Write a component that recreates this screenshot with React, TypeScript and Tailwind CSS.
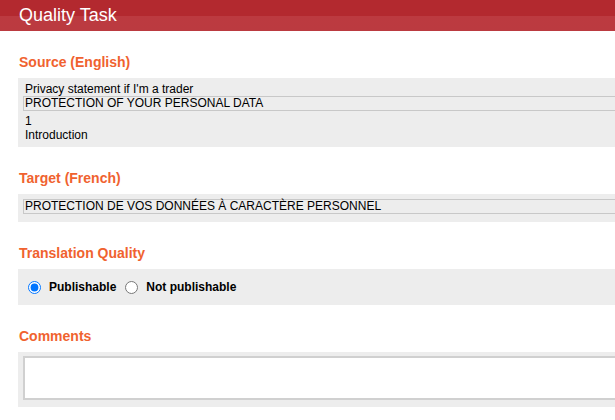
import React from "react";

const Heading = ({ children }: { children: React.ReactNode }) => (
  <div className="mt-[23px] mb-[8px] pl-[19px] h-[16px] leading-[16px] text-[14px] font-bold text-[#f0622f]">
    {children}
  </div>
);

export default function App() {
  return (
    <div
      className="w-[615px] h-[420px] overflow-hidden bg-white"
      style={{ fontFamily: '"Liberation Sans", Arial, sans-serif' }}
    >
      <div className="w-[800px]">
        <div className="h-[31px] bg-[linear-gradient(to_bottom,#b3292f_0%,#b3292f_52%,#bc3a40_52%,#bb3a40_100%)] pl-[19px] text-white text-[18px] leading-[30px]">
          Quality Task
        </div>

        <Heading>Source (English)</Heading>
        <div className="ml-[18px] bg-[#ededed] px-[5px] pt-[5px] pb-[5px] text-[12px] text-black">
          <div className="h-[13px] leading-[13px] pl-[2px]">Privacy statement if I'm a trader</div>
          <div className="h-[15px] border border-[#c8c8c8] pl-[1px] leading-[13px]">
            PROTECTION OF YOUR PERSONAL DATA
          </div>
          <div className="mt-[3px] h-[14px] leading-[14px] pl-[2px]">1</div>
          <div className="h-[14px] leading-[14px] pl-[2px]">Introduction</div>
        </div>

        <Heading>Target (French)</Heading>
        <div className="ml-[18px] bg-[#ededed] px-[5px] pt-[5px] pb-[8px] text-[12px] text-black">
          <div className="h-[15px] border border-[#c8c8c8] pl-[1px] leading-[13px]">
            PROTECTION DE VOS DONNÉES À CARACTÈRE PERSONNEL
          </div>
        </div>

        <Heading>Translation Quality</Heading>
        <div className="ml-[18px] h-[36px] bg-[#ededed] flex items-center pl-[10px] text-[12px] font-bold text-black">
          <label className="flex items-center">
            <input type="radio" name="q" defaultChecked className="m-0 w-[13px] h-[13px]" />
            <span className="ml-[8px]">Publishable</span>
          </label>
          <label className="flex items-center ml-[9px]">
            <input type="radio" name="q" className="m-0 w-[13px] h-[13px]" />
            <span className="ml-[8px]">Not publishable</span>
          </label>
        </div>

        <Heading>Comments</Heading>
        <div className="ml-[18px] bg-[#ededed] px-[5px] pt-[4px] pb-[7px]">
          <textarea className="block w-full h-[44px] bg-white border-2 border-[#d0d0d0] resize-none outline-none" />
        </div>
      </div>
    </div>
  );
}
